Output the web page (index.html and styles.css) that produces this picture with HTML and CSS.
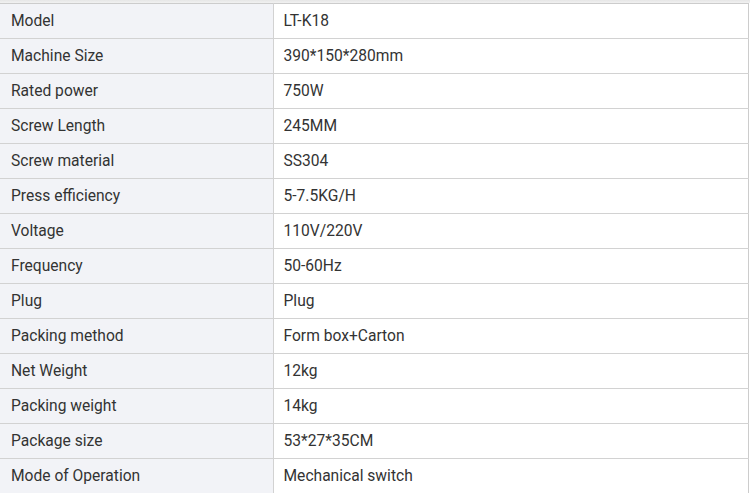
FILE: index.html
```html
<!DOCTYPE html>
<html>
<head>
<meta charset="utf-8">
<link rel="stylesheet" href="styles.css">
</head>
<body>
<div class="wrap">
<table class="spec">
<tr><td class="k">Model</td><td class="v">LT-K18</td></tr>
<tr><td class="k">Machine Size</td><td class="v">390*150*280mm</td></tr>
<tr><td class="k">Rated power</td><td class="v">750W</td></tr>
<tr><td class="k">Screw Length</td><td class="v">245MM</td></tr>
<tr><td class="k">Screw material</td><td class="v">SS304</td></tr>
<tr><td class="k">Press efficiency</td><td class="v">5-7.5KG/H</td></tr>
<tr><td class="k">Voltage</td><td class="v">110V/220V</td></tr>
<tr><td class="k">Frequency</td><td class="v">50-60Hz</td></tr>
<tr><td class="k">Plug</td><td class="v">Plug</td></tr>
<tr><td class="k">Packing method</td><td class="v">Form box+Carton</td></tr>
<tr><td class="k">Net Weight</td><td class="v">12kg</td></tr>
<tr><td class="k">Packing weight</td><td class="v">14kg</td></tr>
<tr><td class="k">Package size</td><td class="v">53*27*35CM</td></tr>
<tr><td class="k">Mode of Operation</td><td class="v">Mechanical switch</td></tr>
</table>
</div>
</body>
</html>
```
FILE: styles.css
```css
html, body {
  margin: 0;
  padding: 0;
  background: #ffffff;
  overflow: hidden;
}
.wrap {
  width: 750px;
  height: 493px;
  overflow: hidden;
  background: linear-gradient(#e6e6e6, #f1f1f1) top / 100% 3px no-repeat;
  padding-top: 3px;
  box-sizing: border-box;
}
.spec {
  border-collapse: collapse;
  width: 749px;
  font-family: Roboto, "Liberation Sans", sans-serif;
  font-size: 15.6px;
  color: #333333;
  border-right: 1px solid #cccccc;
}
.spec td {
  height: 35px;
  padding: 0 10px;
  border-top: 1px solid #d2d2d2;
  border-bottom: 1px solid #d2d2d2;
  box-sizing: border-box;
  vertical-align: middle;
  line-height: 18px;
}
.spec tr:first-child td {
  border-top-color: #cccccc;
}
.spec .k {
  width: 273px;
  padding-left: 11px;
  background: #f2f3f7;
  border-right: 1px solid #d2d2d2;
}
.spec .v {
  background: #ffffff;
}
```
